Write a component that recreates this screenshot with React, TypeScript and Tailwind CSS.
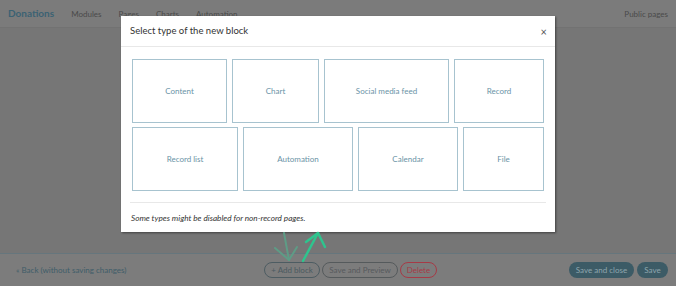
import React from "react";

const row1 = [
  { label: "Content", w: "w-[95px]" },
  { label: "Chart", w: "w-[87px]" },
  { label: "Social media feed", w: "w-[125px]" },
  { label: "Record", w: "w-[90px]" },
];
const row2 = [
  { label: "Record list", w: "w-[106px]" },
  { label: "Automation", w: "w-[110px]" },
  { label: "Calendar", w: "w-[100px]" },
  { label: "File", w: "w-[81px]" },
];

function Tile({ label, w }: { label: string; w: string }) {
  return (
    <div
      className={`${w} h-[64px] shrink-0 border border-[#a7c3cf] flex items-center justify-center text-[8px] text-[#6a93a6]`}
    >
      {label}
    </div>
  );
}

export default function App() {
  return (
    <div
      className="relative w-[676px] h-[286px] overflow-hidden bg-[#767676] flex flex-col"
      style={{ fontFamily: "Lato, 'Open Sans', sans-serif" }}
    >
      {/* top nav */}
      <div className="h-[28px] shrink-0 bg-[#7b7b7b] border-b border-[#727272] flex items-center px-[8px]">
        <span className="text-[10px] font-bold text-[#3b6273] mr-[17px]">Donations</span>
        <div className="flex items-center gap-[17px] text-[8px] text-[#4a4a4a]">
          <span>Modules</span>
          <span>Pages</span>
          <span>Charts</span>
          <span>Automation</span>
        </div>
        <span className="ml-auto text-[8px] text-[#4a4a4a]">Public pages</span>
      </div>

      <div className="flex-1" />

      {/* bottom bar */}
      <div className="h-[33px] shrink-0 bg-[#7c7c7c] border-t border-[#66767d] flex items-center pl-[16px] pr-[8px]">
        <span className="w-[248px] shrink-0 text-[8px] text-[#3f5c69]">« Back (without saving changes)</span>
        <div className="flex items-center gap-[2px]">
          <div className="w-[56px] h-[16px] rounded-full border border-[#4d5c62] flex items-center justify-center text-[8px] text-[#4b5a60]">
            + Add block
          </div>
          <div className="w-[76px] h-[16px] rounded-full border border-[#555a5c] flex items-center justify-center text-[8px] text-[#575a5c]">
            Save and Preview
          </div>
          <div className="w-[37px] h-[16px] rounded-full border border-[#a63a46] flex items-center justify-center text-[8px] text-[#a63a46]">
            Delete
          </div>
        </div>
        <div className="ml-auto flex items-center gap-[3px]">
          <div className="w-[65px] h-[16px] rounded-full bg-[#3c5b66] flex items-center justify-center text-[8px] text-[#8fa6ae]">
            Save and close
          </div>
          <div className="w-[31px] h-[16px] rounded-full bg-[#3c5b66] flex items-center justify-center text-[8px] text-[#8fa6ae]">
            Save
          </div>
        </div>
      </div>

      {/* modal */}
      <div className="absolute left-[121px] top-[16px] w-[434px] h-[216px] bg-white shadow-[1px_1px_2px_rgba(0,0,0,0.45)] flex flex-col">
        <div className="h-[31px] shrink-0 border-b border-[#e8e8e8] flex items-center pl-[9px] pr-[8px]">
          <span className="text-[9.5px] text-[#333]">Select type of the new block</span>
          <span className="ml-auto text-[11px] leading-none text-[#555]">×</span>
        </div>
        <div className="px-[11px] pt-[12px] flex flex-col gap-[4px]">
          <div className="flex gap-[5px]">
            {row1.map((t) => (
              <Tile key={t.label} {...t} />
            ))}
          </div>
          <div className="flex gap-[5px]">
            {row2.map((t) => (
              <Tile key={t.label} {...t} />
            ))}
          </div>
        </div>
        <div className="mx-[9px] mt-[11px] border-t border-[#e8e8e8]" />
        <div className="px-[10px] pt-[9px] text-[8.2px] italic text-[#333]">
          Some types might be disabled for non-record pages.
        </div>
      </div>

      {/* arrows */}
      <svg className="absolute left-0 top-0 pointer-events-none" width="676" height="286">
        <g stroke="#5e9c86" strokeWidth="2" fill="none" strokeLinecap="round" strokeLinejoin="round">
          <path d="M284 233 L289 260" />
          <path d="M275 248 L289 260 L297 247" />
        </g>
        <g stroke="#2fc48e" strokeWidth="2.5" fill="none" strokeLinecap="round" strokeLinejoin="round">
          <path d="M303 261 L318 233" />
          <path d="M306 242 L318 233 L325 247" />
        </g>
      </svg>
    </div>
  );
}
